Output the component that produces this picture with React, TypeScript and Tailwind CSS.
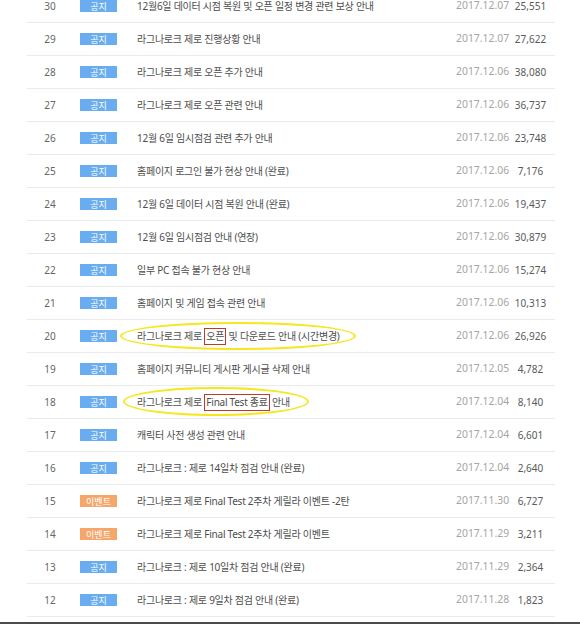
import React from 'react'

type Post = {
  no: number
  kind: 'notice' | 'event'
  title: React.ReactNode
  date: string
  views: string
  ring?: { left: number; top: number; width: number; height: number }
}

function Mark({ children }: { children: React.ReactNode }) {
  return (
    <span className="inline-block h-[17px] border border-[#c0392b] px-[1px] leading-[15px]">
      {children}
    </span>
  )
}

const posts: Post[] = [
  { no: 30, kind: 'notice', title: '12월6일 데이터 시점 복원 및 오픈 일정 변경 관련 보상 안내', date: '2017.12.07', views: '25,551' },
  { no: 29, kind: 'notice', title: '라그나로크 제로 진행상황 안내', date: '2017.12.07', views: '27,622' },
  { no: 28, kind: 'notice', title: '라그나로크 제로 오픈 추가 안내', date: '2017.12.06', views: '38,080' },
  { no: 27, kind: 'notice', title: '라그나로크 제로 오픈 관련 안내', date: '2017.12.06', views: '36,737' },
  { no: 26, kind: 'notice', title: '12월 6일 임시점검 관련 추가 안내', date: '2017.12.06', views: '23,748' },
  { no: 25, kind: 'notice', title: '홈페이지 로그인 불가 현상 안내 (완료)', date: '2017.12.06', views: '7,176' },
  { no: 24, kind: 'notice', title: '12월 6일 데이터 시점 복원 안내 (완료)', date: '2017.12.06', views: '19,437' },
  { no: 23, kind: 'notice', title: '12월 6일 임시점검 안내 (연장)', date: '2017.12.06', views: '30,879' },
  { no: 22, kind: 'notice', title: '일부 PC 접속 불가 현상 안내', date: '2017.12.06', views: '15,274' },
  { no: 21, kind: 'notice', title: '홈페이지 및 게임 접속 관련 안내', date: '2017.12.06', views: '10,313' },
  {
    no: 20,
    kind: 'notice',
    title: (
      <>
        라그나로크 제로 <Mark>오픈</Mark> 및 다운로드 안내 (시간변경)
      </>
    ),
    date: '2017.12.06',
    views: '26,926',
    ring: { left: 93, top: 2, width: 236, height: 28 },
  },
  { no: 19, kind: 'notice', title: '홈페이지 커뮤니티 게시판 게시글 삭제 안내', date: '2017.12.05', views: '4,782' },
  {
    no: 18,
    kind: 'notice',
    title: (
      <>
        라그나로크 제로 <Mark>Final Test 종료</Mark> 안내
      </>
    ),
    date: '2017.12.04',
    views: '8,140',
    ring: { left: 96, top: 1, width: 186, height: 29 },
  },
  { no: 17, kind: 'notice', title: '캐릭터 사전 생성 관련 안내', date: '2017.12.04', views: '6,601' },
  { no: 16, kind: 'notice', title: '라그나로크 : 제로 14일차 점검 안내 (완료)', date: '2017.12.04', views: '2,640' },
  { no: 15, kind: 'event', title: '라그나로크 제로 Final Test 2주차 게릴라 이벤트 -2탄', date: '2017.11.30', views: '6,727' },
  { no: 14, kind: 'event', title: '라그나로크 제로 Final Test 2주차 게릴라 이벤트', date: '2017.11.29', views: '3,211' },
  { no: 13, kind: 'notice', title: '라그나로크 : 제로 10일차 점검 안내 (완료)', date: '2017.11.29', views: '2,364' },
  { no: 12, kind: 'notice', title: '라그나로크 : 제로 9일차 점검 안내 (완료)', date: '2017.11.28', views: '1,823' },
]

export default function App() {
  return (
    <div className="flex h-[624px] w-[580px] flex-col overflow-hidden bg-white font-['Noto_Sans','Noto_Sans_CJK_KR',sans-serif]">
      <div className="mt-[-10px] ml-[27px] w-[528px]">
        {posts.map((p) => (
          <div key={p.no} className="relative flex h-[33px] items-center border-b border-[#ebebeb]">
            <div className="w-[46px] text-center text-[10px] text-[#666]">{p.no}</div>
            <div className="flex w-[51px] justify-center">
              <span
                className={
                  p.kind === 'notice'
                    ? 'flex h-[12px] w-[37px] items-center justify-center bg-[#69adf0] text-[9px] leading-none text-white'
                    : 'flex h-[12px] w-[37px] items-center justify-center bg-[#f6a66b] text-[9px] leading-none text-white'
                }
              >
                {p.kind === 'notice' ? '공지' : '이벤트'}
              </span>
            </div>
            <div className="flex-1 truncate pl-[13px] text-[10px] tracking-[-0.25px] text-[#4d4d4d]">{p.title}</div>
            <div className="w-[52px] text-center text-[10.4px] text-[#a5a5a5]">{p.date}</div>
            <div className="w-[47px] pr-[2px] text-center text-[10px] text-[#5a5a5a]">{p.views}</div>
            {p.ring && (
              <div
                className="pointer-events-none absolute rounded-[50%] border-2 border-[#f4e71c]"
                style={{ left: p.ring.left, top: p.ring.top, width: p.ring.width, height: p.ring.height }}
              />
            )}
          </div>
        ))}
      </div>
      <div className="flex-1" />
      <div className="h-[2px] bg-[#4b4b4b]" />
    </div>
  )
}
